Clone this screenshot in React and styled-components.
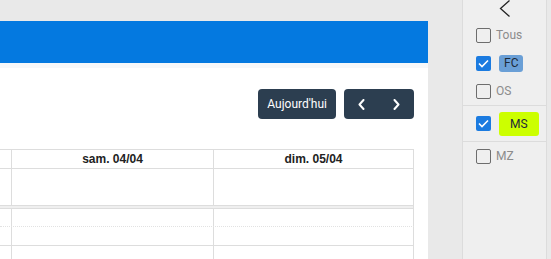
import React from 'react';
import styled, { createGlobalStyle } from 'styled-components';

const GlobalStyle = createGlobalStyle`
  html, body {
    margin: 0;
    padding: 0;
    height: 100%;
    overflow: hidden;
  }
  body {
    background: #e9e9e9;
    font-family: Roboto, "Liberation Sans", Arial, sans-serif;
  }
  #root { height: 100%; }
`;

const Page = styled.div`
  display: flex;
  height: 100vh;
  background: #e9e9e9;
  overflow: hidden;
`;

const Main = styled.main`
  flex: none;
  width: 428px;
  margin-top: 21px;
  background: #fff;
  display: flex;
  flex-direction: column;
`;

const Header = styled.header`
  flex: none;
  height: 42px;
  background: #0479e0;
  border-bottom: 5px solid #f6f8fa;
`;

const Content = styled.section`
  flex: none;
  padding: 21px 14px 0 0;
`;

const Toolbar = styled.div`
  display: flex;
  justify-content: flex-end;
  gap: 8px;
`;

const DarkButton = styled.button`
  height: 30px;
  padding: 0 9px;
  border: none;
  border-radius: 4px;
  background: #2c3e50;
  color: #fff;
  font-family: Roboto, "Liberation Sans", sans-serif;
  font-size: 12px;
  font-weight: 400;
`;

const NavGroup = styled.div`
  display: flex;
  border-radius: 4px;
  overflow: hidden;
  background: #2c3e50;
`;

const NavButton = styled.button`
  width: 35px;
  height: 30px;
  border: none;
  background: transparent;
  display: flex;
  align-items: center;
  justify-content: center;
  padding: 0;
`;

const Calendar = styled.div`
  margin-top: 30px;
  border-top: 1px solid #ddd;
`;

const GridRow = styled.div`
  display: grid;
  grid-template-columns: 12px 202px 200px;
  height: ${p => p.$h}px;
  border-bottom: 1px ${p => (p.$dotted ? 'dotted #e2e2e2' : 'solid #ddd')};
`;

const Cell = styled.div`
  border-right: 1px solid #ddd;
  display: flex;
  align-items: center;
  justify-content: center;
  font-family: "Liberation Sans", Arial, sans-serif;
  font-size: 12px;
  font-weight: bold;
  color: #222;
`;

const Divider = styled.div`
  width: 413px;
  height: 2px;
  background: #efefef;
  border-right: 1px solid #ddd;
  border-bottom: 1px solid #ddd;
`;

const Sidebar = styled.aside`
  flex: none;
  width: 83px;
  margin-left: 34px;
  background: #efefef;
  border-left: 1px solid #dcdcdc;
  border-right: 1px solid #dcdcdc;
  display: flex;
  flex-direction: column;
`;

const Collapse = styled.div`
  flex: none;
  height: 21px;
  display: flex;
  justify-content: center;
  align-items: flex-start;
`;

const ItemRow = styled.div`
  flex: none;
  display: flex;
  align-items: center;
  gap: 5px;
  padding-left: 13px;
  height: ${p => (p.$tall ? 35 : 28)}px;
  border-top: ${p => (p.$divided ? '1px solid #dcdcdc' : 'none')};
`;

const Box = styled.span`
  box-sizing: border-box;
  width: 15px;
  height: 15px;
  border-radius: 2px;
  border: ${p => (p.$checked ? 'none' : '1.5px solid #6d6d6d')};
  background: ${p => (p.$checked ? '#1b7be0' : 'transparent')};
  display: flex;
  align-items: center;
  justify-content: center;
  flex: none;
`;

const Label = styled.span`
  font-size: 12px;
  color: #8c8c8c;
`;

const Badge = styled.span`
  margin-left: 3px;
  height: ${p => p.$h}px;
  padding: 0 ${p => p.$px}px;
  border-radius: 3px;
  background: ${p => p.$bg};
  color: #1d2a38;
  font-size: 12px;
  display: flex;
  align-items: center;
`;

const Chevron = ({ dir }) => (
  <svg width="7" height="11" viewBox="0 0 7 11">
    <polyline
      points={dir === 'left' ? '5.5,1 1.5,5.5 5.5,10' : '1.5,1 5.5,5.5 1.5,10'}
      fill="none"
      stroke="#fff"
      strokeWidth="2"
      strokeLinecap="round"
      strokeLinejoin="round"
    />
  </svg>
);

const Check = () => (
  <svg width="11" height="9" viewBox="0 0 11 9">
    <polyline points="1,4.5 4,7.5 10,1.5" fill="none" stroke="#fff" strokeWidth="1.6" />
  </svg>
);

function Item({ checked, label, badge, divided, tall }) {
  return (
    <ItemRow $divided={divided} $tall={tall}>
      <Box $checked={checked}>{checked && <Check />}</Box>
      {badge ? (
        <Badge $bg={badge.bg} $h={badge.h} $px={badge.px}>{label}</Badge>
      ) : (
        <Label>{label}</Label>
      )}
    </ItemRow>
  );
}

const slots = [
  { h: 17, dotted: true },
  { h: 18, dotted: false },
  { h: 18, dotted: true },
  { h: 18, dotted: false },
];

export default function App() {
  return (
    <Page>
      <GlobalStyle />
      <Main>
        <Header />
        <Content>
          <Toolbar>
            <DarkButton>Aujourd'hui</DarkButton>
            <NavGroup>
              <NavButton><Chevron dir="left" /></NavButton>
              <NavButton><Chevron dir="right" /></NavButton>
            </NavGroup>
          </Toolbar>
          <Calendar>
            <GridRow $h={18}>
              <Cell />
              <Cell>sam. 04/04</Cell>
              <Cell>dim. 05/04</Cell>
            </GridRow>
            <GridRow $h={36}>
              <Cell />
              <Cell />
              <Cell />
            </GridRow>
            <Divider />
            {slots.map((s, i) => (
              <GridRow key={i} $h={s.h} $dotted={s.dotted}>
                <Cell />
                <Cell />
                <Cell />
              </GridRow>
            ))}
          </Calendar>
        </Content>
      </Main>
      <Sidebar>
        <Collapse>
          <svg width="12" height="17" viewBox="0 0 12 17">
            <polyline points="10.5,0.5 1.5,8.5 10.5,16.5" fill="none" stroke="#222" strokeWidth="1.3" />
          </svg>
        </Collapse>
        <Item label="Tous" />
        <Item checked label="FC" badge={{ bg: '#6a9fd6', h: 17, px: 5 }} />
        <Item label="OS" />
        <Item divided tall checked label="MS" badge={{ bg: '#ccff00', h: 24, px: 11 }} />
        <Item divided label="MZ" />
      </Sidebar>
    </Page>
  );
}
